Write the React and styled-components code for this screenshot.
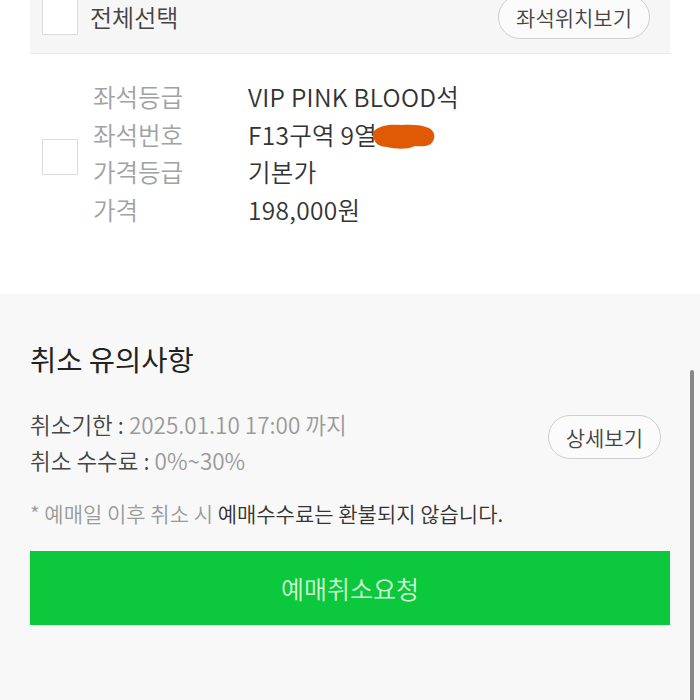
import React from "react";
import styled, { createGlobalStyle } from "styled-components";

const Global = createGlobalStyle`
  html, body { margin: 0; padding: 0; background: #ffffff; }
  body { font-family: "Noto Sans CJK KR", "Noto Sans", sans-serif; overflow: hidden; }
  * { box-sizing: border-box; }
`;

const Page = styled.div`
  position: relative;
  width: 700px;
  height: 700px;
  overflow: hidden;
  display: flex;
  flex-direction: column;
  font-weight: 350;
`;

const SelectBar = styled.div`
  margin: -20px 30px 0;
  height: 74px;
  background: #f6f6f6;
  border-bottom: 1px solid #ebebeb;
  display: flex;
  align-items: center;
  padding: 0 20px 0 12px;
`;

const Check = styled.span`
  display: block;
  width: 36px;
  height: 36px;
  background: #ffffff;
  border: 1.5px solid #dcdcdc;
  flex: none;
  margin-top: ${(p) => p.$offset || 0}px;
`;

const SelectLabel = styled.span`
  margin-left: 12px;
  font-size: 24px;
  color: #444;
  flex: 1;
`;

const PillButton = styled.button`
  font-family: inherit;
  font-weight: 350;
  height: 44px;
  padding: 0 17px;
  border-radius: 22px;
  border: 1.5px solid #cfcfcf;
  background: #fbfbfb;
  color: #444;
  font-size: 21px;
  display: flex;
  align-items: center;
  justify-content: center;
`;

const ItemSection = styled.div`
  display: flex;
  align-items: center;
  padding: 24px 0 66px 42px;
  background: #fff;
`;

const InfoGrid = styled.div`
  margin-left: 15px;
  display: grid;
  grid-template-columns: 155px auto;
  grid-auto-rows: 37.5px;
  align-items: center;
  font-size: 24.5px;
`;

const Label = styled.span`
  color: #a2a2a2;
`;

const Value = styled.span`
  color: #333;
  display: flex;
  align-items: center;
  letter-spacing: 0.3px;
`;

const Redact = styled.svg`
  margin-left: -6px;
  margin-top: 6px;
`;

const Notice = styled.div`
  flex: 1;
  background: #f8f8f8;
  padding: 47px 30px 0;
  display: flex;
  flex-direction: column;
`;

const Title = styled.h2`
  margin: 0;
  font-size: 28.5px;
  font-weight: 400;
  line-height: 36px;
  color: #222;
`;

const TermsRow = styled.div`
  margin-top: 29px;
  display: flex;
  align-items: flex-start;
  justify-content: space-between;
  padding-right: 9px;
`;

const TermsList = styled.div`
  display: flex;
  flex-direction: column;
`;

const Term = styled.div`
  font-size: 22.5px;
  line-height: 36px;
  color: #444;
`;

const Muted = styled.span`
  color: #9a9a9a;
`;

const DetailWrap = styled.div`
  margin-top: 9px;
`;

const Note = styled.p`
  margin: 20px 0 0;
  font-size: 21px;
  line-height: 30px;
  color: #333;
`;

const CancelButton = styled.button`
  margin-top: 23px;
  height: 74px;
  width: 100%;
  border: none;
  background: #0bc83c;
  color: #d3f7d6;
  font-family: inherit;
  font-weight: 350;
  font-size: 25px;
  display: flex;
  align-items: center;
  justify-content: center;
`;

const Scrollbar = styled.div`
  position: absolute;
  right: 6px;
  top: 370px;
  width: 4px;
  height: 340px;
  background: #888;
  border-radius: 2px;
`;

const rows = [
  ["좌석등급", "VIP PINK BLOOD석"],
  ["좌석번호", "F13구역 9열"],
  ["가격등급", "기본가"],
  ["가격", "198,000원"],
];

export default function App() {
  return (
    <>
      <Global />
      <Page>
        <SelectBar>
          <Check />
          <SelectLabel>전체선택</SelectLabel>
          <PillButton>좌석위치보기</PillButton>
        </SelectBar>
        <ItemSection>
          <Check $offset={8} />
          <InfoGrid>
            {rows.map(([l, v], i) => (
              <React.Fragment key={l}>
                <Label>{l}</Label>
                <Value>
                  {v}
                  {i === 1 && (
                    <Redact width="66" height="30" viewBox="0 0 66 30">
                      <path
                        d="M4 8 C10 3 20 2 30 3 C42 2 52 3 58 6 C63 9 65 14 62 19 C60 24 52 25 44 24 C36 28 24 27 16 25 C10 25 4 22 3 17 C1 13 2 10 4 8 Z"
                        fill="#e05a06"
                      />
                    </Redact>
                  )}
                </Value>
              </React.Fragment>
            ))}
          </InfoGrid>
        </ItemSection>
        <Notice>
          <Title>취소 유의사항</Title>
          <TermsRow>
            <TermsList>
              <Term>
                취소기한 : <Muted>2025.01.10 17:00 까지</Muted>
              </Term>
              <Term>
                취소 수수료 : <Muted>0%~30%</Muted>
              </Term>
            </TermsList>
            <DetailWrap>
              <PillButton>상세보기</PillButton>
            </DetailWrap>
          </TermsRow>
          <Note>
            <Muted>* 예매일 이후 취소 시 </Muted>예매수수료는 환불되지 않습니다.
          </Note>
          <CancelButton>예매취소요청</CancelButton>
        </Notice>
        <Scrollbar />
      </Page>
    </>
  );
}
